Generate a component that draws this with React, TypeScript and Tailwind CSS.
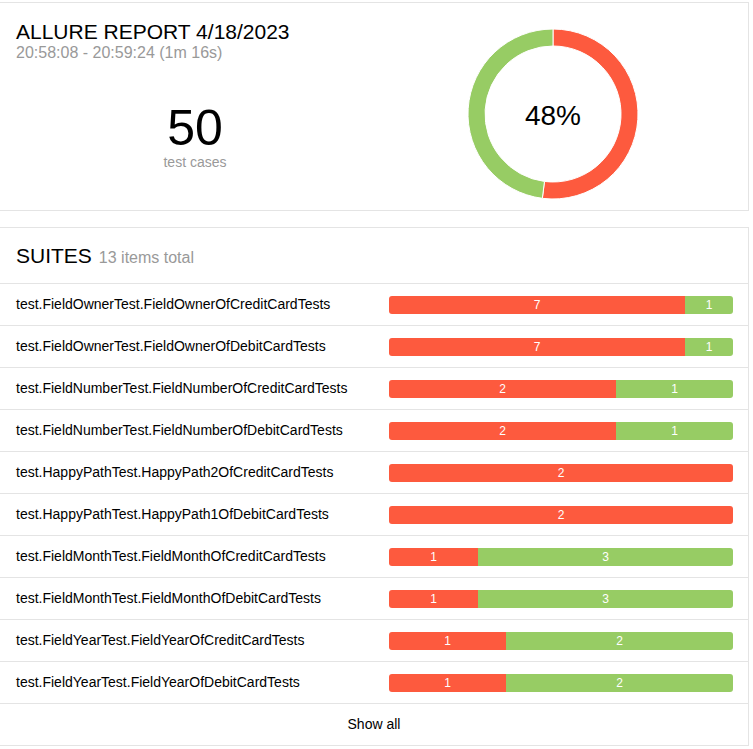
import React from "react"

type Suite = {
  name: string
  failed: number
  passed: number
  failedWidth: number // px of the 344px bar
}

const suites: Suite[] = [
  { name: "test.FieldOwnerTest.FieldOwnerOfCreditCardTests", failed: 7, passed: 1, failedWidth: 296 },
  { name: "test.FieldOwnerTest.FieldOwnerOfDebitCardTests", failed: 7, passed: 1, failedWidth: 296 },
  { name: "test.FieldNumberTest.FieldNumberOfCreditCardTests", failed: 2, passed: 1, failedWidth: 227 },
  { name: "test.FieldNumberTest.FieldNumberOfDebitCardTests", failed: 2, passed: 1, failedWidth: 227 },
  { name: "test.HappyPathTest.HappyPath2OfCreditCardTests", failed: 2, passed: 0, failedWidth: 344 },
  { name: "test.HappyPathTest.HappyPath1OfDebitCardTests", failed: 2, passed: 0, failedWidth: 344 },
  { name: "test.FieldMonthTest.FieldMonthOfCreditCardTests", failed: 1, passed: 3, failedWidth: 89 },
  { name: "test.FieldMonthTest.FieldMonthOfDebitCardTests", failed: 1, passed: 3, failedWidth: 89 },
  { name: "test.FieldYearTest.FieldYearOfCreditCardTests", failed: 1, passed: 2, failedWidth: 117 },
  { name: "test.FieldYearTest.FieldYearOfDebitCardTests", failed: 1, passed: 2, failedWidth: 117 },
]

function Donut() {
  // red = failed (52%), green = passed (48%), drawn clockwise from 12 o'clock
  return (
    <div className="relative h-[172px] w-[172px]">
      <svg width="172" height="172" viewBox="-1 -1 172 172">
        <path
          d="M85,0 A85,85 0 1 1 74.35,169.33 L76.48,152.46 A68,68 0 1 0 85,17 Z"
          fill="#fd5a3e"
          stroke="#fff"
          strokeWidth="1"
        />
        <path
          d="M74.35,169.33 A85,85 0 0 1 85,0 L85,17 A68,68 0 0 0 76.48,152.46 Z"
          fill="#97cc64"
          stroke="#fff"
          strokeWidth="1"
        />
      </svg>
      <div className="absolute inset-0 flex items-center justify-center pt-[3px] text-[28px] text-black">
        48%
      </div>
    </div>
  )
}

function SuiteRow({ suite }: { suite: Suite }) {
  const passedWidth = 344 - suite.failedWidth
  return (
    <div className="flex h-[42px] items-center border-b border-[#e4e4e4]">
      <div className="w-[389px] pl-4 text-[14px] text-black">{suite.name}</div>
      <div className="flex h-[18px] w-[344px] overflow-hidden rounded-[3px] text-[12px] leading-[18px] text-white">
        <div className="bg-[#fd5a3e] text-center" style={{ width: suite.failedWidth }}>
          {suite.failed}
        </div>
        {suite.passed > 0 && (
          <div className="bg-[#97cc64] text-center" style={{ width: passedWidth }}>
            {suite.passed}
          </div>
        )}
      </div>
    </div>
  )
}

export default function App() {
  return (
    <div className="min-h-screen bg-white pt-[2px] font-['Liberation_Sans',Arial,sans-serif]">
      {/* Summary widget */}
      <div className="flex h-[209px] w-[749px] border-y border-r border-[#e4e4e4]">
        <div className="flex w-[374px] flex-col pl-4 pt-[17px]">
          <div className="text-[21px] leading-[24px] text-black">ALLURE REPORT 4/18/2023</div>
          <div className="text-[16px] leading-[18px] text-[#999]">20:58:08 - 20:59:24 (1m 16s)</div>
          <div className="mt-[41px] flex flex-col items-center">
            <div className="text-[50px] leading-[50px] text-black">50</div>
            <div className="mt-[2px] text-[14px] leading-[14px] text-[#999]">test cases</div>
          </div>
        </div>
        <div className="ml-[93px] mt-[25px]">
          <Donut />
        </div>
      </div>

      {/* Suites widget */}
      <div className="mt-4 w-[749px] border-y border-r border-[#e4e4e4]">
        <div className="flex h-[56px] items-baseline border-b border-[#e4e4e4] pl-4 pt-4">
          <span className="text-[21px] leading-[24px] text-black">SUITES</span>
          <span className="ml-[7px] text-[16px] leading-[24px] text-[#999]">13 items total</span>
        </div>
        {suites.map((s) => (
          <SuiteRow key={s.name} suite={s} />
        ))}
        <div className="flex h-[41px] items-center justify-center text-[14px] text-black">
          Show all
        </div>
      </div>
    </div>
  )
}
